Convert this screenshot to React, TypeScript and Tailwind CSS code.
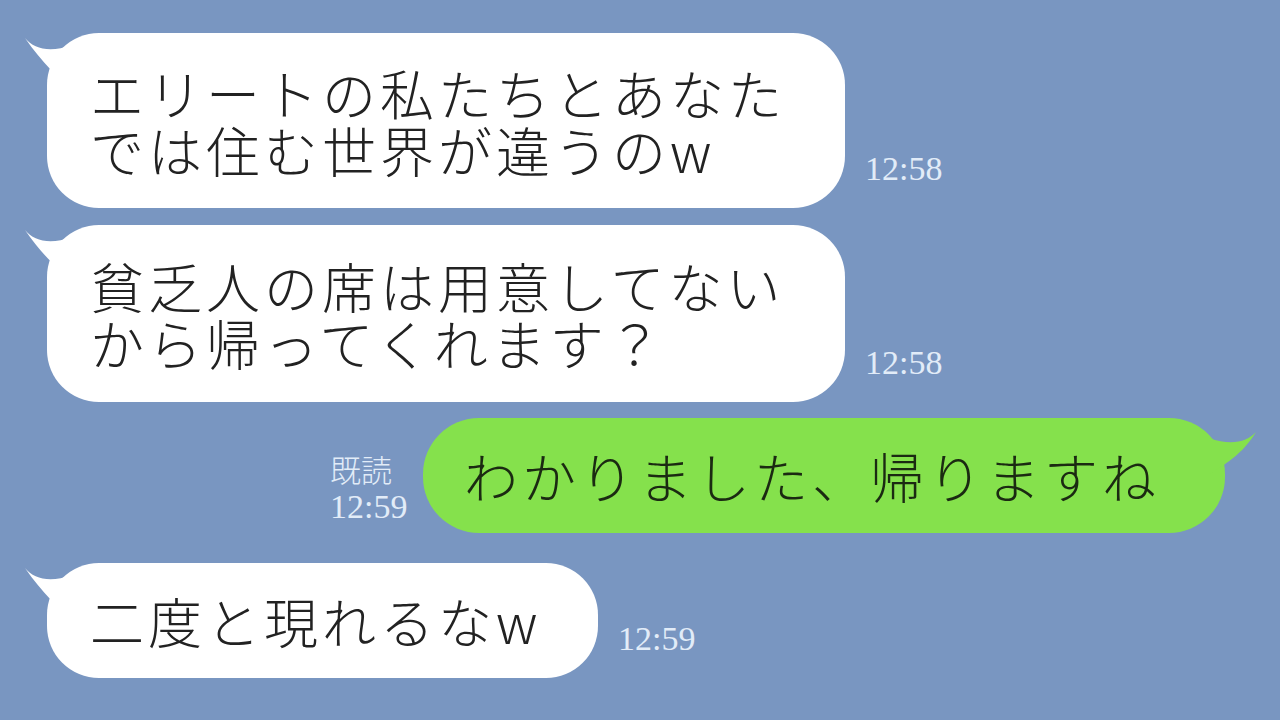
import React from 'react';

const jp = '"Noto Sans CJK JP", "Noto Sans", sans-serif';
const serif = '"Liberation Serif", "Noto Sans CJK JP", serif';

const LeftTail = () => (
  <svg className="absolute left-[-23px] top-0" width="60" height="60" viewBox="0 0 60 60">
    <path d="M1 5 C 10 16 26 20 48 12 L 48 56 C 36 46 18 30 1 5 Z" fill="#ffffff" />
  </svg>
);

const RightTail = () => (
  <svg className="absolute right-[-32px] top-0" width="60" height="60" viewBox="0 0 60 60">
    <path d="M59 14 C 50 24 34 28 12 20 L 12 56 C 26 48 46 36 59 14 Z" fill="#85e14c" />
  </svg>
);

interface InBubbleProps {
  lines: string[];
  width: string;
  height: string;
  time: string;
}

const Incoming: React.FC<InBubbleProps> = ({ lines, width, height, time }) => (
  <div className="flex items-end pl-[47px]">
    <div className={`relative ${width} ${height} rounded-[52px] bg-white flex flex-col justify-center pl-[43px]`}>
      <LeftTail />
      <div
        className="relative text-[54px] leading-[57px] tracking-[4px] font-light text-[#222222] whitespace-nowrap"
        style={{ fontFamily: jp }}
      >
        {lines.map((l, i) => (
          <div key={i}>{l}</div>
        ))}
      </div>
    </div>
    <div
      className="ml-[20px] mb-[22px] text-[34px] leading-[34px] text-[#e2ecf8]"
      style={{ fontFamily: serif }}
    >
      {time}
    </div>
  </div>
);

export default function App() {
  return (
    <div className="w-[1280px] h-[720px] overflow-hidden bg-[#7996c1] pt-[33px] flex flex-col">
      <Incoming
        lines={['エリートの私たちとあなた', 'では住む世界が違うのw']}
        width="w-[798px]"
        height="h-[175px]"
        time="12:58"
      />
      <div className="mt-[17px]">
        <Incoming
          lines={['貧乏人の席は用意してない', 'から帰ってくれます？']}
          width="w-[798px]"
          height="h-[177px]"
          time="12:58"
        />
      </div>
      <div className="mt-[16px] flex items-end pl-[330px]">
        <div className="mb-[6px] w-[93px] text-[#e2ecf8]">
          <div className="text-[31px] leading-[36px] font-light" style={{ fontFamily: jp }}>
            既読
          </div>
          <div className="text-[34px] leading-[40px]" style={{ fontFamily: serif }}>
            12:59
          </div>
        </div>
        <div className="relative w-[802px] h-[115px] rounded-[56px] bg-[#85e14c] flex items-center pl-[41px]">
          <RightTail />
          <div
            className="relative text-[54px] leading-[57px] tracking-[4px] font-light text-[#1b2a12] whitespace-nowrap"
            style={{ fontFamily: jp }}
          >
            わかりました、帰りますね
          </div>
        </div>
      </div>
      <div className="mt-[30px]">
        <Incoming lines={['二度と現れるなw']} width="w-[551px]" height="h-[115px]" time="12:59" />
      </div>
    </div>
  );
}
